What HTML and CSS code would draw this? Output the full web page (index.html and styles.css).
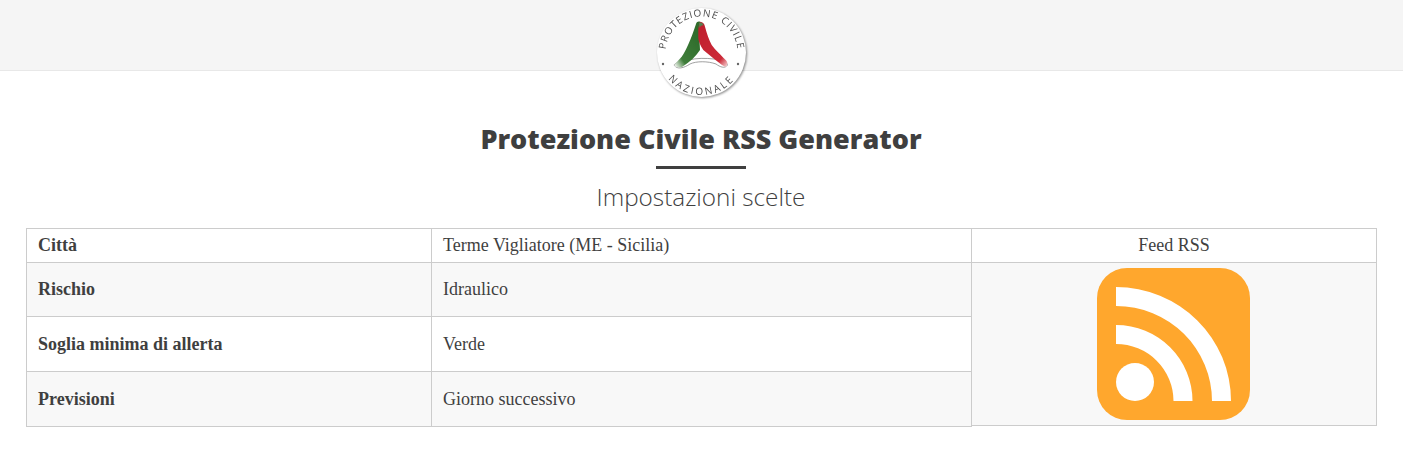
FILE: index.html
```html
<!DOCTYPE html>
<html lang="it">
<head>
<meta charset="utf-8">
<title>Protezione Civile RSS Generator</title>
<link rel="stylesheet" href="styles.css">
</head>
<body>
<header class="topbar">
  <svg class="logo" width="92" height="92" viewBox="0 0 92 92" role="img" aria-label="Protezione Civile Nazionale">
    <defs>
      <path id="arcTop" d="M19.600 70.500 A36 36 0 1 1 71.400 70.500"/>
      <path id="arcBottom" d="M3 45.500 A42.500 42.500 0 0 0 88 45.500"/>
      <linearGradient id="fadeGreen" x1="0.7" y1="0.2" x2="0.05" y2="1">
        <stop offset="0" stop-color="#2f6d2c"/>
        <stop offset=".72" stop-color="#3f7d3a"/>
        <stop offset="1" stop-color="#f2f5f0"/>
      </linearGradient>
      <linearGradient id="fadeRed" x1="0.3" y1="0" x2="1" y2="1">
        <stop offset="0" stop-color="#c01f2e"/>
        <stop offset=".78" stop-color="#cc2a38"/>
        <stop offset="1" stop-color="#f7dcdc"/>
      </linearGradient>
    </defs>
    <circle class="logo-disc" cx="45.500" cy="45.500" r="44.500"/>
    <text class="logo-text"><textPath href="#arcTop" startOffset="50%" text-anchor="middle">PROTEZIONE CIVILE</textPath></text>
    <text class="logo-text logo-text-wide"><textPath href="#arcBottom" startOffset="50%" text-anchor="middle">NAZIONALE</textPath></text>
    <circle class="logo-dot" cx="7" cy="57" r="1.200"/>
    <circle class="logo-dot" cx="82" cy="57" r="1.200"/>
    <path class="logo-band" d="M18 58 C21 63 28 61 34 57 C40 54 52 54 60 57 C64 60 69 62 71.500 58 C70 53 64 53 58 52 C50 51 40 51 33 53 C26 54 20 55 18 58Z"/>
    <path d="M40 17 C41 14 44 14 45 16 L43 23 L44 43 C40 49 34 55 26 60 C22 61 18 60 18.500 57.500 L25.700 49.700 C30 44 35 32 40 17Z" fill="url(#fadeGreen)"/>
    <path d="M44 14.700 C47 15 48.500 17 49 19.700 C51 27 53 33 55.700 38 C59 43 64 47 67.300 50.700 C70 53 72 55 71.300 57.300 C71 59 70 60 69 59.700 C65 58 61 54 57.300 51.300 L47.300 43 C44 38 42.500 34 42.300 31 L42.300 23 C42.500 20 43 17 44 14.700Z" fill="url(#fadeRed)"/>
    <path d="M43 16 C45 15 47 16 47.500 18.500 C46 18 44.500 19 43.500 21Z" fill="#55804f"/>
  </svg>
</header>

<main class="content">
  <h1 class="title">Protezione Civile RSS Generator</h1>
  <hr class="rule">
  <h2 class="subtitle">Impostazioni scelte</h2>

  <div class="tables">
    <table class="settings">
      <tr class="row-head"><th>Città</th><td>Terme Vigliatore (ME - Sicilia)</td></tr>
      <tr class="row-a striped"><th>Rischio</th><td>Idraulico</td></tr>
      <tr class="row-b"><th>Soglia minima di allerta</th><td>Verde</td></tr>
      <tr class="row-c striped"><th>Previsioni</th><td>Giorno successivo</td></tr>
    </table>
    <table class="feed">
      <tr class="row-head"><td>Feed RSS</td></tr>
      <tr class="feed-row striped"><td>
        <a class="feed-link" href="#" aria-label="Feed RSS">
          <svg class="rss" width="153" height="152" viewBox="0 0 153 152">
            <rect width="153" height="152" rx="30" fill="#ffa72d"/>
            <circle cx="38" cy="114" r="19" fill="#fff"/>
            <path d="M19 19 A115 114 0 0 1 134 133 H115 A96 95 0 0 0 19 38 Z" fill="#fff"/>
            <path d="M19 57 A76.500 76 0 0 1 95.500 133 H76.500 A57.500 57 0 0 0 19 76 Z" fill="#fff"/>
          </svg>
        </a>
      </td></tr>
    </table>
  </div>
</main>
</body>
</html>
```

FILE: styles.css
```css
* { box-sizing: border-box; }

html, body { margin: 0; padding: 0; }

body {
  background: #fff;
  color: #3f3f3f;
  font-family: "Liberation Serif", serif;
  font-size: 18px;
}

.topbar {
  position: relative;
  height: 71px;
  background: #f5f5f5;
  border-bottom: 1px solid #e8e8e8;
}

.logo {
  position: absolute;
  left: 656px;
  top: 7px;
  filter: drop-shadow(1px 1px 1px rgba(0, 0, 0, .45));
}

.logo-disc { fill: #fff; }
.logo-dot { fill: #666; }
.logo-band { fill: #fff; stroke: #777; stroke-width: .7; }

.logo-text {
  font-family: "Open Sans", sans-serif;
  font-size: 10px;
  letter-spacing: .9px;
  fill: #4d4d4d;
}

.logo-text-wide { letter-spacing: 2.400px; }

.content { padding: 0 27px 0 26px; }

.title {
  margin: 52px 0 0;
  font-family: "Open Sans", sans-serif;
  font-size: 27px;
  font-weight: 800;
  line-height: 32px;
  text-align: center;
  color: #3f3f3f;
}

.rule {
  width: 90px;
  height: 3px;
  margin: 11px auto 0;
  border: 0;
  background: #3f3f3f;
}

.subtitle {
  margin: 12px 0 0;
  font-family: "Open Sans", sans-serif;
  font-size: 24.300px;
  font-weight: 300;
  line-height: 32px;
  text-align: center;
  color: #3f3f3f;
}

.tables {
  display: flex;
  align-items: flex-start;
  margin-top: 15px;
}

table {
  border-collapse: collapse;
  table-layout: fixed;
}

.settings { width: 946px; flex: none; }
.feed { width: 406px; margin-left: -1px; flex: none; }

th, td {
  border: 1px solid #ccc;
  padding: 0 11px;
  font-weight: 400;
  text-align: left;
  vertical-align: middle;
}

th { width: 405px; font-weight: 700; }

.striped th, .striped td { background: #f8f8f8; }

.row-head { height: 34px; }
.row-a { height: 54px; }
.row-b { height: 55px; }
.row-c { height: 55px; }

.feed td { text-align: center; }

.feed-row td { padding: 5px 2px 5px 0; height: 162px; line-height: 0; }

.feed-link { display: inline-block; }
.rss { display: block; }
```
